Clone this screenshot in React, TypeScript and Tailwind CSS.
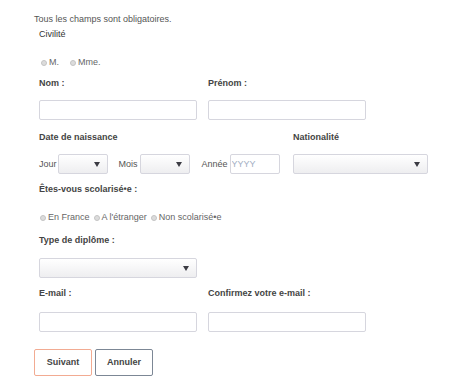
import React from "react";

const label = "text-[9px] leading-[11px] font-bold text-[#444]";
const input = "block h-[20px] border border-[#d6d6de] rounded-[2px] bg-white";

function Radio({ text }: { text: string }) {
  return (
    <span className="flex items-center">
      <span className="w-[6px] h-[6px] rounded-full bg-[#dcdcdc] border border-[#c4c4c4]" />
      <span className="ml-[2px] text-[9px] leading-[11px] text-[#666]">{text}</span>
    </span>
  );
}

function Select({ w }: { w: string }) {
  return (
    <div
      className={`${w} h-[20px] flex items-center justify-end pr-[7px] border border-[#d6d6de] rounded-[2px] bg-gradient-to-b from-white to-[#eeeef0]`}
    >
      <svg width="6" height="5" viewBox="0 0 6 5">
        <path d="M0 0 H6 L3 5 Z" fill="#3c3c44" />
      </svg>
    </div>
  );
}

export default function App() {
  return (
    <div className="w-[450px] h-[385px] bg-white font-['Liberation_Sans',Arial,sans-serif] overflow-hidden">
      <p className="pl-[34px] pt-[14px] text-[9px] leading-[11px] text-[#555]">
        Tous les champs sont obligatoires.
      </p>
      <div className="pl-[39px]">
        <p className="mt-[4px] text-[9px] leading-[11px] font-medium text-[#333]">Civilité</p>

        <div className="mt-[17px] flex items-center gap-[11px] pl-[2px]">
          <Radio text="M." />
          <Radio text="Mme." />
        </div>

        <div className="mt-[10px] grid grid-cols-[158px_158px] gap-x-[11px]">
          <p className={label}>Nom :</p>
          <p className={label}>Prénom :</p>
          <input className={`${input} mt-[11px] w-[158px]`} />
          <input className={`${input} mt-[11px] w-[158px]`} />
        </div>

        <div className="mt-[12px] flex">
          <div className="w-[254px]">
            <p className={label}>Date de naissance</p>
            <div className="mt-[11px] flex items-center text-[9px] leading-[11px] text-[#555]">
              <span>Jour</span>
              <span className="ml-[1px]">
                <Select w="w-[50px]" />
              </span>
              <span className="ml-[11px]">Mois</span>
              <span className="ml-[2px]">
                <Select w="w-[50px]" />
              </span>
              <span className="ml-[12px]">Année</span>
              <input
                placeholder="YYYY"
                className={`${input} ml-[2px] w-[50px] pl-[1px] text-[9px] placeholder:text-[#a3aec2]`}
              />
            </div>
          </div>
          <div>
            <p className={label}>Nationalité</p>
            <div className="mt-[11px]">
              <Select w="w-[135px]" />
            </div>
          </div>
        </div>

        <p className={`${label} mt-[10px]`}>Êtes-vous scolarisé•e :</p>
        <div className="mt-[17px] flex items-center gap-[4px] pl-[1px]">
          <Radio text="En France" />
          <Radio text="A l'étranger" />
          <Radio text="Non scolarisé•e" />
        </div>

        <p className={`${label} mt-[12px]`}>Type de diplôme :</p>
        <div className="mt-[12px]">
          <Select w="w-[158px]" />
        </div>

        <div className="mt-[10px] grid grid-cols-[158px_158px] gap-x-[11px]">
          <p className={label}>E-mail :</p>
          <p className={label}>Confirmez votre e-mail :</p>
          <input className={`${input} mt-[13px] w-[158px]`} />
          <input className={`${input} mt-[13px] w-[158px]`} />
        </div>

        <div className="mt-[17px] -ml-[5px] flex gap-[3px]">
          <button className="w-[58px] h-[27px] border border-[#f2ab92] rounded-[2px] bg-white text-[9px] font-bold text-[#444]">
            Suivant
          </button>
          <button className="w-[58px] h-[27px] border border-[#7c8795] rounded-[2px] bg-white text-[9px] font-bold text-[#444]">
            Annuler
          </button>
        </div>
      </div>
    </div>
  );
}
